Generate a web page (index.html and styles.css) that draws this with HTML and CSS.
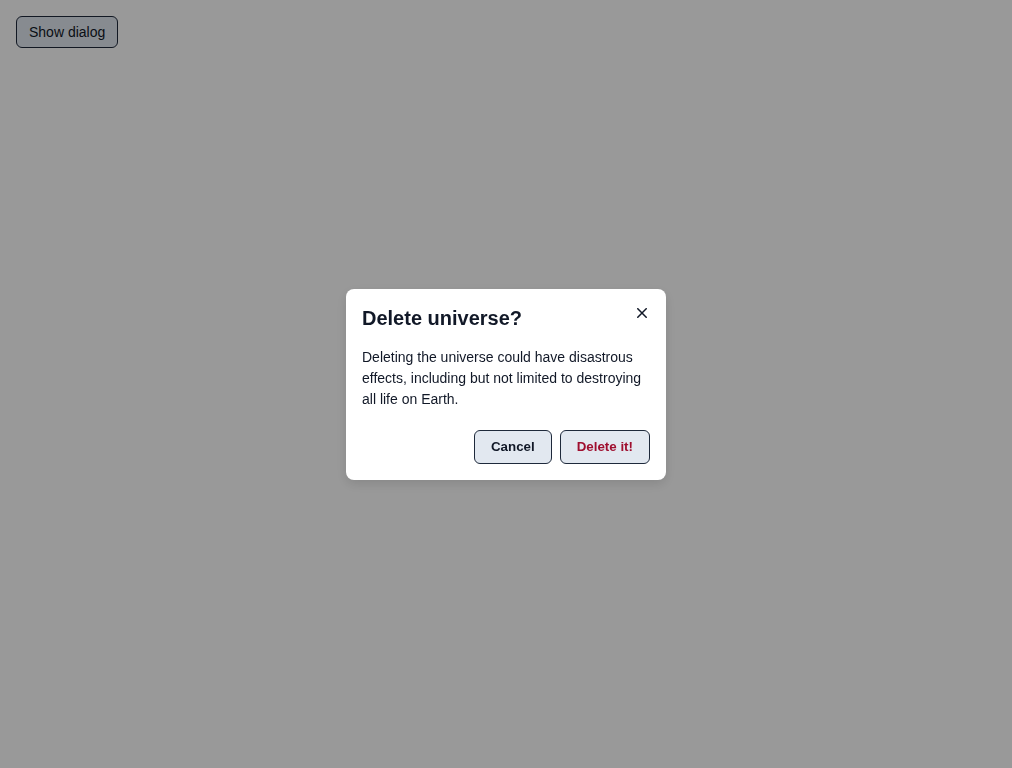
FILE: index.html
```html
<!DOCTYPE html>
<html lang="en">
<head>
<meta charset="utf-8">
<title>Dialog</title>
<link rel="stylesheet" href="styles.css">
</head>
<body>
<button class="trigger" type="button">Show dialog</button>
<div class="overlay">
  <div class="dialog" role="dialog" aria-labelledby="dlg-title">
    <h2 class="dialog-title" id="dlg-title">Delete universe?</h2>
    <p class="dialog-text">Deleting the universe could have disastrous effects, including but not limited to destroying all life on Earth.</p>
    <div class="dialog-actions">
      <button class="btn" type="button">Cancel</button>
      <button class="btn btn-danger" type="button">Delete it!</button>
    </div>
    <button class="close" type="button" aria-label="Close">
      <svg width="10" height="10" viewBox="0 0 10 10"><path d="M0.8 0.8L9.2 9.2M9.2 0.8L0.8 9.2" stroke="#111827" stroke-width="1.5" stroke-linecap="square"/></svg>
    </button>
  </div>
</div>
</body>
</html>
```
FILE: styles.css
```css
html, body {
  margin: 0;
  height: 100%;
}
body {
  padding: 16px;
  box-sizing: border-box;
  background: #ffffff;
  font-family: "Liberation Sans", Arial, sans-serif;
  color: #111827;
}
.trigger {
  height: 32px;
  padding: 0 12px;
  font-family: inherit;
  font-size: 14px;
  color: #111827;
  background: #e2e8f0;
  border: 1px solid #1e293b;
  border-radius: 6px;
}
.overlay {
  position: fixed;
  inset: 0;
  background: rgba(0, 0, 0, 0.4);
  display: flex;
  align-items: center;
  justify-content: center;
}
.dialog {
  position: relative;
  width: 320px;
  box-sizing: border-box;
  padding: 16px;
  background: #ffffff;
  border-radius: 8px;
  box-shadow: 0 4px 12px rgba(0, 0, 0, 0.12);
}
.dialog-title {
  margin: 0 0 16px;
  font-size: 20px;
  line-height: 26px;
  font-weight: 700;
  color: #111827;
}
.dialog-text {
  margin: 0 0 20px;
  font-size: 14px;
  line-height: 21px;
  color: #111827;
}
.dialog-actions {
  display: flex;
  justify-content: flex-end;
  gap: 8px;
}
.btn {
  height: 34px;
  padding: 0 16px;
  font-family: inherit;
  font-size: 13.333px;
  font-weight: 700;
  color: #111827;
  background: #e2e8f0;
  border: 1px solid #1e293b;
  border-radius: 6px;
}
.btn-danger {
  color: #9f0f2f;
}
.close {
  position: absolute;
  top: 12px;
  right: 12px;
  width: 24px;
  height: 24px;
  padding: 0;
  border: 0;
  background: transparent;
  display: flex;
  align-items: center;
  justify-content: center;
}
```
